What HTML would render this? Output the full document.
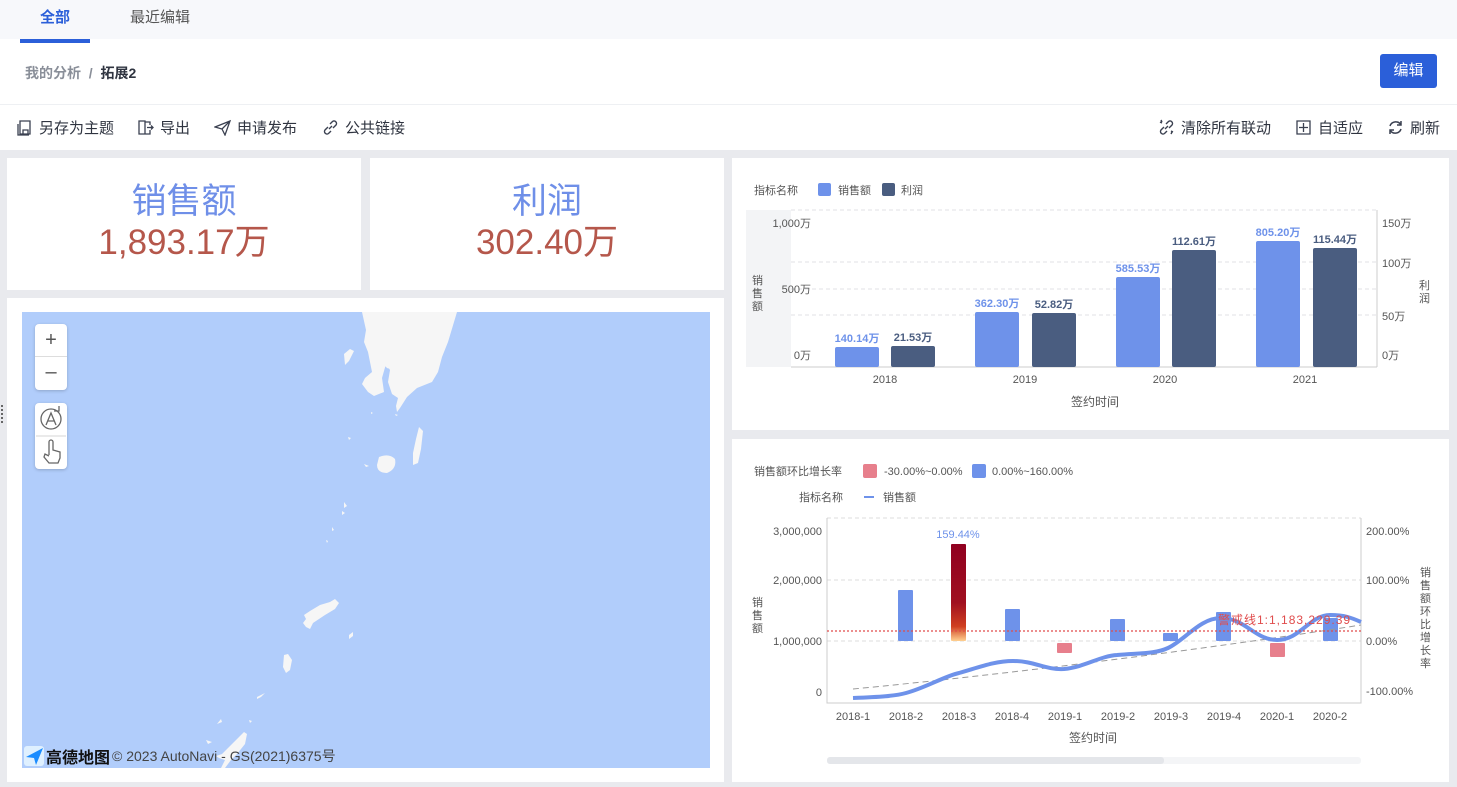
<!DOCTYPE html>
<html><head><meta charset="utf-8"><style>
*{margin:0;padding:0;box-sizing:border-box}
body{width:1457px;height:787px;overflow:hidden;background:#e9eaee;font-family:"Liberation Sans","Noto Sans CJK SC",sans-serif;position:relative;color:#333}
.abs{position:absolute}
.tabs{left:0;top:0;width:1457px;height:39px;background:#f7f8fb}
.card{background:#fff;position:absolute}
.tb{position:absolute;top:117px;font-size:15px;color:#2f3440;display:flex;align-items:center;gap:6px}
.tb svg{width:17px;height:17px}
</style></head><body>
<div class="abs tabs"></div>
<div class="abs" style="left:40px;top:6px;font-size:15px;color:#2b5fd9;font-weight:bold">全部</div>
<div class="abs" style="left:130px;top:6px;font-size:15px;color:#555">最近编辑</div>
<div class="abs" style="left:0;top:39px;width:1457px;height:111px;background:#fff"></div>
<div class="abs" style="left:20px;top:39px;width:70px;height:4px;background:#2b5fd9"></div>
<div class="abs" style="left:25px;top:63px;font-size:14px;color:#8a8f99;font-weight:bold">我的分析 &nbsp;/ &nbsp;<span style="color:#2f3440">拓展2</span></div>
<div class="abs" style="left:1380px;top:54px;width:57px;height:34px;background:#2b5fd9;border-radius:3px;color:#fff;font-size:15px;text-align:center;line-height:34px">编辑</div>
<div class="abs" style="left:0;top:104px;width:1457px;height:1px;background:#eef0f3"></div>
<div class="tb" style="left:16px"><svg viewBox="0 0 17 17" fill="none" stroke="#3a4050" stroke-width="1.3"><path d="M4 2h10v13H4z M2 5v11h11"/><path d="M7 15v-4h5v4"/></svg>另存为主题</div>
<div class="tb" style="left:137px"><svg viewBox="0 0 17 17" fill="none" stroke="#3a4050" stroke-width="1.3"><path d="M2 2h6v13H2z M8 3h5v3 M13 11v4H8 M10 8.5h6 M14 6.5l2 2-2 2"/></svg>导出</div>
<div class="tb" style="left:214px"><svg viewBox="0 0 17 17" fill="none" stroke="#3a4050" stroke-width="1.3"><path d="M1 8l15-6-5 14-3-6z M8 10l8-8"/></svg>申请发布</div>
<div class="tb" style="left:322px"><svg viewBox="0 0 17 17" fill="none" stroke="#3a4050" stroke-width="1.4"><path d="M7 10l3-3 M6 8L3 11a2.5 2.5 0 003.5 3.5L9 12 M11 9l3-3a2.5 2.5 0 00-3.5-3.5L8 5"/></svg>公共链接</div>
<div class="tb" style="left:1158px"><svg viewBox="0 0 17 17" fill="none" stroke="#3a4050" stroke-width="1.4"><path d="M7 10l3-3 M6 8L3 11a2.5 2.5 0 003.5 3.5L9 12 M11 9l3-3a2.5 2.5 0 00-3.5-3.5L8 5 M2 3l2 1 M3 1l1 2 M13 15l1-2 M15 13l-2-1"/></svg>清除所有联动</div>
<div class="tb" style="left:1295px"><svg viewBox="0 0 17 17" fill="none" stroke="#3a4050" stroke-width="1.3"><path d="M2 2h13v13H2z M8.5 4v9 M4 8.5h9"/></svg>自适应</div>
<div class="tb" style="left:1387px"><svg viewBox="0 0 17 17" fill="none" stroke="#3a4050" stroke-width="1.5"><path d="M14 6A6 6 0 003 7 M3 11a6 6 0 0011-1 M14 2v4h-4 M3 15v-4h4"/></svg>刷新</div>

<div class="card" style="left:7px;top:158px;width:354px;height:132px;text-align:center">
<div style="font-size:35px;color:#6f8fe8;margin-top:24px;line-height:40px">销售额</div>
<div style="font-size:35px;color:#b5574b;line-height:42px">1,893.17万</div></div>
<div class="card" style="left:370px;top:158px;width:354px;height:132px;text-align:center">
<div style="font-size:35px;color:#6f8fe8;margin-top:24px;line-height:40px">利润</div>
<div style="font-size:35px;color:#b5574b;line-height:42px">302.40万</div></div>
<div class="card" style="left:7px;top:298px;width:717px;height:484px"></div>
<div class="card" style="left:732px;top:158px;width:717px;height:272px"></div>
<div class="card" style="left:732px;top:439px;width:717px;height:343px"></div>
<div class="abs" style="left:1px;top:405px;width:2px;height:18px;border-left:2px dotted #666"></div>

<!-- map -->
<div class="abs" style="left:22px;top:312px;width:688px;height:456px;background:#b1cdfb;overflow:hidden">
<svg width="688" height="456" style="position:absolute;left:0;top:0" fill="#f6f6f6">
<path d="M340 0H435L426 30L420 45L416 60L410 70L395 76L385 85L378 96L375 100L374 94L376 86L370 82L366 70L368 58L364 52L360 66L362 80L352 84L346 80L340 72L343 66L350 60L348 50L346 40L342 30L344 18Z"/>
<path d="M361 52q5-6 10 0q-2 6-6 4z"/>
<path d="M322 42l6-5 4 2-5 10-4 4z"/>
<path d="M397 115l4 4-2 18-3 14-5 2 0-12 3-14z"/>
<path d="M357 145q10-4 16 2q2 10-8 14q-10 0-10-8z"/>
<path d="M342 152l5 2-3 1z M326 125l3 1-2 2z M349 100l2 1-2 1z M373 102l3 1-2 1z"/>
<path d="M322 190l3 4-3 2z M320 199l3 2-3 2z M310 215l2 3-2 1z M304 228l2 1-1 2z"/>
<path d="M308 290l5-3 4 4-4 6-10 6-6 4-6 4-3 6-4-2-3-4 3-4-2-4 6-4 10-6z"/>
<path d="M327 323l4-3 0 4-4 3z"/>
<path d="M262 343l4-1 4 6-2 10-4 3-3-6z"/>
<path d="M235 385l8-4-4 4-4 2z M195 412l4-5 1 3z M227 408l3 1-2 2z"/>
<path d="M218 424l4-4 3 2-2 10-8 10-6 6-6 8-4 0 4-8-6-2-3-2 6-2 6-6 6-6z"/>
<path d="M184 428l6 2-4 2z"/>
</svg>
<div style="position:absolute;left:13px;top:12px;width:32px;height:66px;background:#fff;border-radius:4px;box-shadow:0 1px 3px rgba(0,0,0,.2)">
<div style="height:33px;border-bottom:1px solid #ddd;text-align:center;font-size:20px;line-height:32px;color:#555">+</div>
<div style="height:32px;text-align:center;font-size:20px;line-height:30px;color:#555">–</div></div>
<div style="position:absolute;left:13px;top:91px;width:32px;height:66px;background:#fff;border-radius:4px;box-shadow:0 1px 3px rgba(0,0,0,.2)">
<svg width="32" height="66" fill="none" stroke="#666" stroke-width="1.3"><circle cx="16" cy="16" r="10"/><path d="M11 22l5-12 5 12 M13 18h6"/><path d="M24 3v5h-5"/><path d="M1 33h30" stroke="#ddd"/><path d="M14 52v-13a2 2 0 014 0v8l7 2v6l-2 5h-9l-5-6 1-3 4 2"/></svg></div>
<div style="position:absolute;left:2px;top:432px;font-size:14px;color:#333;display:flex;align-items:center;gap:2px">
<svg width="20" height="20"><rect width="20" height="20" rx="3" fill="#dff0ff"/><path d="M2 11L19 2 12 19 10 12z" fill="#1a8cff"/></svg><b style="font-size:16px;color:#111">高德地图</b><span style="color:#444">© 2023 AutoNavi - GS(2021)6375号</span></div>
</div>

<svg class="abs" style="left:0;top:0" width="1457" height="787" font-family="Liberation Sans,Noto Sans CJK SC,sans-serif" font-size="11" fill="#555">
<!-- chart1 -->
<text x="754" y="194">指标名称</text>
<rect x="818" y="183" width="13" height="13" rx="2" fill="#6e92ea"/><text x="838" y="194">销售额</text>
<rect x="882" y="183" width="13" height="13" rx="2" fill="#4a5d80"/><text x="901" y="194">利润</text>
<rect x="746" y="210" width="45" height="157" fill="#f3f4f6"/>
<g stroke="#e0e2e6" stroke-dasharray="4 3"><path d="M791 210H1377M791 262H1377M791 289H1377M791 315H1377"/></g>
<path d="M791 367H1377M1377 210V367" stroke="#ccc"/>
<g text-anchor="end"><text x="811" y="227">1,000万</text><text x="811" y="293">500万</text><text x="811" y="359">0万</text></g>
<text x="1382" y="227">150万</text><text x="1382" y="267">100万</text><text x="1382" y="320">50万</text><text x="1382" y="359">0万</text>
<text x="752" y="284">销</text><text x="752" y="297">售</text><text x="752" y="310">额</text>
<text x="1419" y="289">利</text><text x="1419" y="302">润</text>
<g fill="#6e92ea"><rect x="835" y="347" width="44" height="20" rx="2"/><rect x="975" y="312" width="44" height="55" rx="2"/><rect x="1116" y="277" width="44" height="90" rx="2"/><rect x="1256" y="241" width="44" height="126" rx="2"/></g>
<g fill="#4a5d80"><rect x="891" y="346" width="44" height="21" rx="2"/><rect x="1032" y="313" width="44" height="54" rx="2"/><rect x="1172" y="250" width="44" height="117" rx="2"/><rect x="1313" y="248" width="44" height="119" rx="2"/></g>
<g text-anchor="middle" font-weight="bold"><g fill="#6e92ea"><text x="857" y="342">140.14万</text><text x="997" y="307">362.30万</text><text x="1138" y="272">585.53万</text><text x="1278" y="236">805.20万</text></g>
<g fill="#4a5d80"><text x="913" y="341">21.53万</text><text x="1054" y="308">52.82万</text><text x="1194" y="245">112.61万</text><text x="1335" y="243">115.44万</text></g></g>
<g text-anchor="middle"><text x="885" y="383">2018</text><text x="1025" y="383">2019</text><text x="1165" y="383">2020</text><text x="1305" y="383">2021</text><text x="1095" y="406" font-size="12">签约时间</text></g>

<!-- chart2 -->
<defs><linearGradient id="g" x1="0" y1="0" x2="0" y2="1"><stop offset="0" stop-color="#900020"/><stop offset="0.6" stop-color="#a01020"/><stop offset="0.85" stop-color="#d04020"/><stop offset="1" stop-color="#ffd090"/></linearGradient></defs>
<text x="754" y="475">销售额环比增长率</text>
<rect x="863" y="464" width="14" height="14" rx="2" fill="#e77f8c"/><text x="884" y="475">-30.00%~0.00%</text>
<rect x="972" y="464" width="14" height="14" rx="2" fill="#6e92ea"/><text x="992" y="475">0.00%~160.00%</text>
<text x="799" y="501">指标名称</text><path d="M864 497h10" stroke="#6e92ea" stroke-width="2"/><text x="883" y="501">销售额</text>
<g stroke="#ddd" stroke-dasharray="4 3"><path d="M827 518H1361M827 580H1361M827 641H1361"/></g>
<path d="M827 518V703H1361V518" stroke="#ccc" fill="none"/>
<g text-anchor="end"><text x="822" y="535">3,000,000</text><text x="822" y="584">2,000,000</text><text x="822" y="645">1,000,000</text><text x="822" y="696">0</text></g>
<text x="1366" y="535">200.00%</text><text x="1366" y="584">100.00%</text><text x="1366" y="645">0.00%</text><text x="1366" y="695">-100.00%</text>
<text x="752" y="606">销</text><text x="752" y="619">售</text><text x="752" y="632">额</text>
<g><text x="1420" y="576">销</text><text x="1420" y="589">售</text><text x="1420" y="602">额</text><text x="1420" y="615">环</text><text x="1420" y="628">比</text><text x="1420" y="641">增</text><text x="1420" y="654">长</text><text x="1420" y="667">率</text></g>
<g fill="#6e92ea"><rect x="898" y="590" width="15" height="51" rx="1"/><rect x="1005" y="609" width="15" height="32" rx="1"/><rect x="1110" y="619" width="15" height="22" rx="1"/><rect x="1163" y="633" width="15" height="8" rx="1"/><rect x="1216" y="612" width="15" height="29" rx="1"/><rect x="1323" y="618" width="15" height="23" rx="1"/></g>
<rect x="951" y="544" width="15" height="97" rx="1" fill="url(#g)"/>
<g fill="#e77f8c"><rect x="1057" y="643" width="15" height="10" rx="1"/><rect x="1270" y="643" width="15" height="14" rx="1"/></g>
<path d="M853 689C1000 675 1200 650 1361 625" stroke="#999" stroke-dasharray="6 4" fill="none"/>
<path d="M853 698C880 697 895 696 906 693C925 688 945 676 959 673C980 667 995 661 1013 661C1035 661 1045 670 1064 669C1085 667 1100 656 1117 655C1140 653 1155 654 1168 648C1185 640 1200 618 1221 618C1245 618 1255 640 1277 640C1300 640 1310 615 1330 615C1345 615 1352 618 1361 622" stroke="#6e92ea" stroke-width="4" fill="none"/>
<path d="M827 631H1361" stroke="#e04c4c" stroke-dasharray="2 2" stroke-width="1.3"/>
<text x="1218" y="624" fill="#e04c4c" font-size="12" letter-spacing="1">警戒线1:1,183,229.39</text>
<text x="958" y="538" fill="#6e92ea" text-anchor="middle">159.44%</text>
<g text-anchor="middle"><text x="853" y="720">2018-1</text><text x="906" y="720">2018-2</text><text x="959" y="720">2018-3</text><text x="1012" y="720">2018-4</text><text x="1065" y="720">2019-1</text><text x="1118" y="720">2019-2</text><text x="1171" y="720">2019-3</text><text x="1224" y="720">2019-4</text><text x="1277" y="720">2020-1</text><text x="1330" y="720">2020-2</text><text x="1093" y="742" font-size="12">签约时间</text></g>
<rect x="827" y="757" width="534" height="7" rx="3" fill="#f4f5f7"/><rect x="827" y="757" width="337" height="7" rx="3" fill="#e4e6ea"/>
</svg>
</body></html>
